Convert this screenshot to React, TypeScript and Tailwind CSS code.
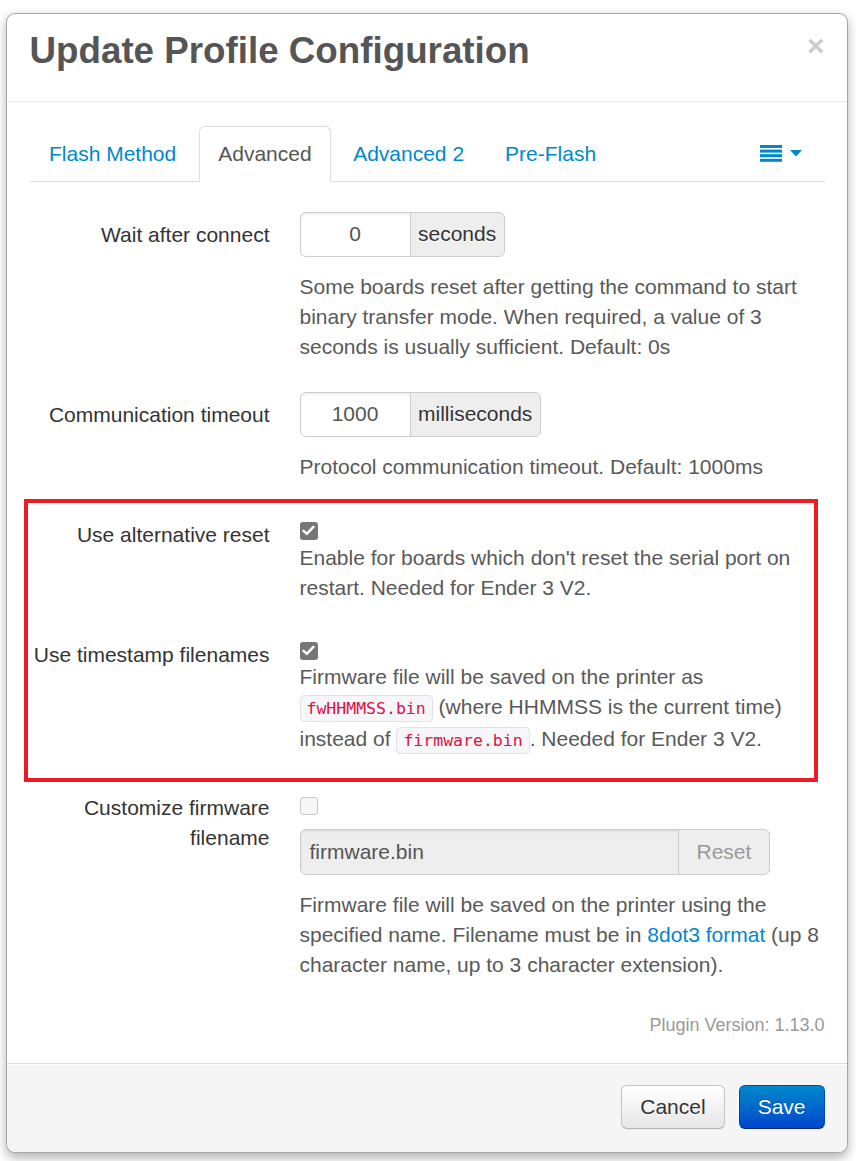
import React from "react";

const FONT = { fontFamily: '"Liberation Sans", Arial, Helvetica, sans-serif' };

function Check({ checked }: { checked: boolean }) {
  if (!checked) {
    return (
      <div className="w-[18px] h-[18px] rounded-[3px] border border-[#c8c8c8] bg-[#f6f6f6]" />
    );
  }
  return (
    <div className="w-[18px] h-[18px] rounded-[3px] bg-[#767676] flex items-center justify-center">
      <svg width="13" height="11" viewBox="0 0 13 11">
        <path d="M1.6 5.8 L4.8 8.9 L11.4 1.9" fill="none" stroke="#fff" strokeWidth="2.4" strokeLinecap="round" strokeLinejoin="round" />
      </svg>
    </div>
  );
}

function Code({ children }: { children: React.ReactNode }) {
  return (
    <code
      className="px-[6px] py-[3px] text-[16.5px] text-[#dd1144] bg-[#f7f7f9] border border-[#e1e1e8] rounded-[4.5px]"
      style={{ fontFamily: '"DejaVu Sans Mono", "Liberation Mono", monospace' }}
    >
      {children}
    </code>
  );
}

function Row({ label, children, className = "" }: { label: React.ReactNode; children: React.ReactNode; className?: string }) {
  return (
    <div className={"flex " + className}>
      <div className="w-[240px] shrink-0 text-right pt-[8.5px] leading-[30px] text-[#333]">{label}</div>
      <div className="pl-[30px] flex-1">{children}</div>
    </div>
  );
}

function InputAddon({ value, addon, inputW }: { value: string; addon: string; inputW: string }) {
  return (
    <div className="flex">
      <div
        className={
          inputW +
          " h-[45px] border border-[#ccc] rounded-l-[6px] flex items-center justify-center text-[#555] leading-[30px] bg-white shadow-[inset_0_1.5px_1.5px_rgba(0,0,0,0.075)]"
        }
      >
        {value}
      </div>
      <div className="h-[45px] -ml-px px-[7.5px] flex items-center bg-[#eee] border border-[#ccc] rounded-r-[6px] text-[#333] [text-shadow:0_1px_0_#fff]">
        {addon}
      </div>
    </div>
  );
}

export default function App() {
  return (
    <div className="min-h-screen bg-white pt-[13px] pl-[6px] text-[21px]" style={FONT}>
      <div className="relative w-[842px] border border-[rgba(0,0,0,0.35)] rounded-[9px] bg-white shadow-[0_4.5px_10.5px_rgba(0,0,0,0.3)]">
        {/* Header */}
        <div className="flex justify-between items-start px-[22.5px] pt-[14px] pb-[28px] border-b border-[#e5e5e5]">
          <h3 className="m-0 text-[36.75px] leading-[45px] font-bold text-[#555]">Update Profile Configuration</h3>
          <div className="mt-[3px] text-[30px] leading-[30px] font-bold text-black opacity-20">×</div>
        </div>

        {/* Body */}
        <div className="px-[22.5px] pt-[23.5px] pb-[23.5px]">
          {/* Tabs */}
          <div className="flex items-end border-b border-[#ddd] mb-[30px]">
            <div className="-mb-px mr-[3px] px-[18.5px] py-[12px] leading-[30px] border border-transparent text-[#0088cc]">Flash Method</div>
            <div className="-mb-px mr-[3px] px-[18.5px] py-[12px] leading-[30px] border border-[#ddd] border-b-white rounded-t-[6px] bg-white text-[#555]">Advanced</div>
            <div className="-mb-px mr-[3px] px-[18px] py-[12px] leading-[30px] border border-transparent text-[#0088cc]">Advanced 2</div>
            <div className="-mb-px mr-[3px] px-[18px] py-[12px] leading-[30px] border border-transparent text-[#0088cc]">Pre-Flash</div>
            <div className="ml-auto -mb-px pl-[18px] pr-[22px] py-[12px] h-[56px] flex items-center gap-[8px] border border-transparent">
              <svg width="22" height="17" viewBox="0 0 22 17">
                <rect x="0" y="0" width="22" height="3" fill="#0088cc" />
                <rect x="0" y="4.6" width="22" height="3" fill="#0088cc" />
                <rect x="0" y="9.2" width="22" height="3" fill="#0088cc" />
                <rect x="0" y="13.8" width="22" height="3" fill="#0088cc" />
              </svg>
              <svg width="12" height="7" viewBox="0 0 12 7">
                <path d="M0 0 L12 0 L6 6.5 Z" fill="#0088cc" />
              </svg>
            </div>
          </div>

          {/* Wait after connect */}
          <Row label="Wait after connect" className="mb-[30px]">
            <InputAddon value="0" addon="seconds" inputW="w-[111px]" />
            <div className="mt-[15px] leading-[30px] text-[#595959]">
              Some boards reset after getting the command to start binary transfer mode. When required, a value of 3 seconds is usually sufficient. Default: 0s
            </div>
          </Row>

          {/* Communication timeout */}
          <Row label="Communication timeout" className="mb-[30px]">
            <InputAddon value="1000" addon="milliseconds" inputW="w-[111px]" />
            <div className="mt-[15px] leading-[30px] text-[#595959]">Protocol communication timeout. Default: 1000ms</div>
          </Row>

          {/* Highlighted group */}
          <div className="relative">
            <Row label="Use alternative reset" className="mb-[29px]">
              <div className="h-[31px] pt-[10px]">
                <Check checked />
              </div>
              <div className="leading-[30px] text-[#595959]">
                Enable for boards which don't reset the serial port on restart. Needed for Ender 3 V2.
              </div>
            </Row>
            <Row label="Use timestamp filenames">
              <div className="h-[30px] pt-[10px]">
                <Check checked />
              </div>
              <div className="leading-[30px] text-[#595959]">
                Firmware file will be saved on the printer as <Code>fwHHMMSS.bin</Code> (where HHMMSS is the current time) instead of{" "}
                <Code>firmware.bin</Code>. Needed for Ender 3 V2.
              </div>
            </Row>
            <div className="absolute left-[-6px] right-[7px] top-[-13px] bottom-[-26px] border-[4px] border-[#ed1c24] pointer-events-none" />
          </div>

          {/* Customize firmware filename */}
          <Row label={<>Customize firmware<br />filename</>} className="mt-[29px] mb-[30px]">
            <div className="h-[30px] pt-[12px]">
              <Check checked={false} />
            </div>
            <div className="flex mt-[14px]">
              <div className="w-[379px] h-[46px] px-[9px] flex items-center border border-[#ccc] rounded-l-[6px] bg-[#eee] text-[#555] shadow-[inset_0_1.5px_1.5px_rgba(0,0,0,0.075)]">
                firmware.bin
              </div>
              <div className="-ml-px h-[46px] px-[18px] flex items-center border border-[#ccc] rounded-r-[6px] bg-[#eeeeee] text-[#999]">
                Reset
              </div>
            </div>
            <div className="mt-[15px] leading-[30px] text-[#595959]">
              Firmware file will be saved on the printer using the specified name. Filename must be in{" "}
              <span className="text-[#0088cc]">8dot3 format</span> (up 8 character name, up to 3 character extension).
            </div>
          </Row>

          <div className="text-right text-[18px] leading-[30px] text-[#999]">Plugin Version: 1.13.0</div>
        </div>

        {/* Footer */}
        <div className="flex justify-end gap-[14px] bg-[#f5f5f5] border-t border-[#ddd] px-[22.5px] pt-[21px] pb-[22.5px] rounded-b-[9px] shadow-[inset_0_1px_0_#fff]">
          <div className="px-[18px] py-[6px] leading-[30px] text-[#333] border border-[#c5c5c5] border-b-[#b3b3b3] rounded-[6px] bg-gradient-to-b from-white to-[#e6e6e6] shadow-[inset_0_1px_0_rgba(255,255,255,0.2),0_1px_2px_rgba(0,0,0,0.05)] [text-shadow:0_1px_1px_rgba(255,255,255,0.75)]">
            Cancel
          </div>
          <div className="px-[18px] py-[6px] leading-[30px] text-white border border-[#0044cc] border-b-[#002a80] rounded-[6px] bg-gradient-to-b from-[#0088cc] to-[#0044cc] [text-shadow:0_-1px_0_rgba(0,0,0,0.25)]">
            Save
          </div>
        </div>
      </div>
    </div>
  );
}
